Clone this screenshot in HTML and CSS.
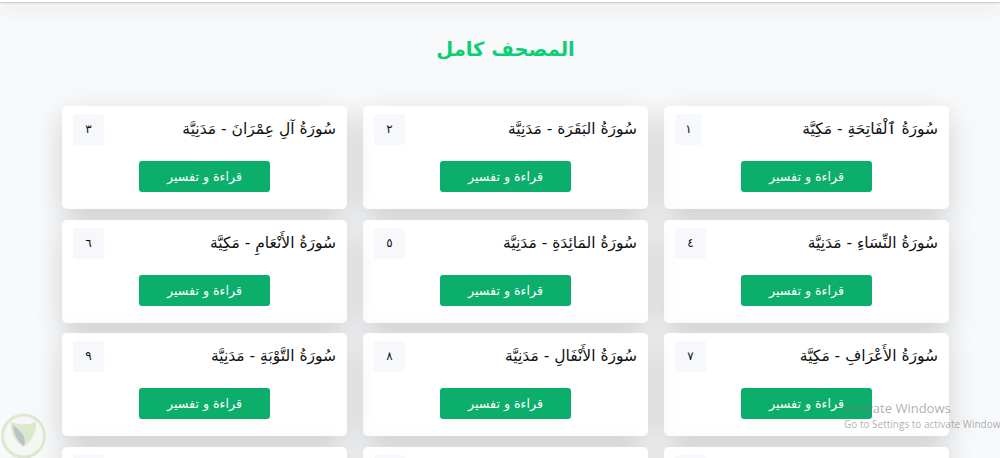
FILE: index.html
```html
<!DOCTYPE html>
<html lang="ar" dir="rtl">
<head>
    <meta charset="utf-8">
    <title>المصحف كامل</title>
    <link rel="stylesheet" href="styles.css">
</head>
<body>
    <div class="topbar"></div>

    <main class="content">
        <h1 class="page-title">المصحف كامل</h1>

        <div class="surah-grid">
            <div class="card">
                <div class="card-head"><h2 class="surah-name">سُورَةُ ٱلْفَاتِحَةِ - مَكِيَّة</h2><span class="num num-narrow">١</span></div>
                <a class="read-btn">قراءة و تفسير</a>
            </div>
            <div class="card">
                <div class="card-head"><h2 class="surah-name">سُورَةُ البَقَرَة - مَدَنِيَّة</h2><span class="num">٢</span></div>
                <a class="read-btn">قراءة و تفسير</a>
            </div>
            <div class="card">
                <div class="card-head"><h2 class="surah-name">سُورَةُ آلِ عِمْرَانَ - مَدَنِيَّة</h2><span class="num">٣</span></div>
                <a class="read-btn">قراءة و تفسير</a>
            </div>
            <div class="card">
                <div class="card-head"><h2 class="surah-name">سُورَةُ النِّسَاءِ - مَدَنِيَّة</h2><span class="num">٤</span></div>
                <a class="read-btn">قراءة و تفسير</a>
            </div>
            <div class="card">
                <div class="card-head"><h2 class="surah-name">سُورَةُ المَائِدَةِ - مَدَنِيَّة</h2><span class="num">٥</span></div>
                <a class="read-btn">قراءة و تفسير</a>
            </div>
            <div class="card">
                <div class="card-head"><h2 class="surah-name">سُورَةُ الأَنْعَامِ - مَكِيَّة</h2><span class="num">٦</span></div>
                <a class="read-btn">قراءة و تفسير</a>
            </div>
            <div class="card">
                <div class="card-head"><h2 class="surah-name">سُورَةُ الأَعْرَافِ - مَكِيَّة</h2><span class="num">٧</span></div>
                <a class="read-btn">قراءة و تفسير</a>
            </div>
            <div class="card">
                <div class="card-head"><h2 class="surah-name">سُورَةُ الأَنْفَالِ - مَدَنِيَّة</h2><span class="num">٨</span></div>
                <a class="read-btn">قراءة و تفسير</a>
            </div>
            <div class="card">
                <div class="card-head"><h2 class="surah-name">سُورَةُ التَّوْبَةِ - مَدَنِيَّة</h2><span class="num">٩</span></div>
                <a class="read-btn">قراءة و تفسير</a>
            </div>
            <!-- Next row, only its top edge is on screen -->
            <div class="card"><div class="card-head"><span class="num"></span></div></div>
            <div class="card"><div class="card-head"><span class="num"></span></div></div>
            <div class="card"><div class="card-head"><span class="num"></span></div></div>
        </div>
    </main>

    <!-- Corner logo -->
    <svg class="site-logo" width="48" height="46" viewBox="0 0 48 46">
        <circle cx="23.5" cy="24" r="21" fill="#f4f7f4" stroke="#dfe8cf" stroke-width="3"/>
        <path d="M11,10 Q23,15 36,10 Q37,26 23,35 Q10,26 11,10" fill="#dce8cb"/>
        <path d="M13,13 Q14,27 24,34 Q28,24 13,13" fill="#b7c4ca"/>
    </svg>

    <div class="activate">
        <div class="activate-title">Activate Windows</div>
        <div class="activate-sub">Go to Settings to activate Windows.</div>
    </div>
</body>
</html>
```

FILE: styles.css
```css
html, body {
    height: 458px;
    overflow: hidden;
}
body {
    margin: 0;
    background: #f8f9fb;
    font-family: "DejaVu Sans", sans-serif;
    color: #111;
}
.topbar {
    height: 2px;
    background: #fff;
    box-shadow: 0 1px 2px rgba(0, 0, 0, 0.22), 0 4px 18px rgba(0, 0, 0, 0.3);
}
.content {
    width: 887px;
    margin-right: 51px;
}
.page-title {
    margin: 32px 0 41px;
    height: 31px;
    line-height: 31px;
    text-align: center;
    font-size: 19.5px;
    font-weight: bold;
    color: #0acf73;
}
.surah-grid {
    display: grid;
    grid-template-columns: repeat(3, 285px);
    column-gap: 16px;
    row-gap: 10.5px;
}
.card {
    height: 103px;
    box-sizing: border-box;
    padding: 8px 11px;
    background: #fff;
    border-radius: 5px;
    box-shadow: 0 10px 30px rgba(0, 0, 0, 0.17);
}
.card-head {
    display: flex;
    justify-content: space-between;
    align-items: center;
    height: 31px;
    margin-bottom: 16px;
}
.surah-name {
    margin: 0;
    font-size: 15.5px;
    font-weight: normal;
    line-height: 31px;
    color: #111;
}
.num {
    width: 31px;
    height: 31px;
    margin-right: auto;
    line-height: 31px;
    text-align: center;
    font-size: 12px;
    background: #f7f8fb;
    border-radius: 3px;
}
.num-narrow {
    width: 27px;
}
.read-btn {
    display: block;
    width: 131px;
    height: 31px;
    margin: 0 auto;
    line-height: 31px;
    text-align: center;
    font-size: 12.6px;
    color: #fff;
    background: #0bae6b;
    border-radius: 3px;
}
.site-logo {
    position: absolute;
    left: 0;
    top: 412px;
    filter: blur(0.6px);
}
.activate {
    position: absolute;
    left: 844px;
    top: 400px;
    width: 156px;
    overflow: hidden;
    white-space: nowrap;
    direction: ltr;
    font-family: "Open Sans", sans-serif;
    color: rgba(120, 120, 120, 0.6);
}
.activate-title {
    font-size: 13px;
    line-height: 17px;
}
.activate-sub {
    font-size: 10px;
    line-height: 14px;
}
```
